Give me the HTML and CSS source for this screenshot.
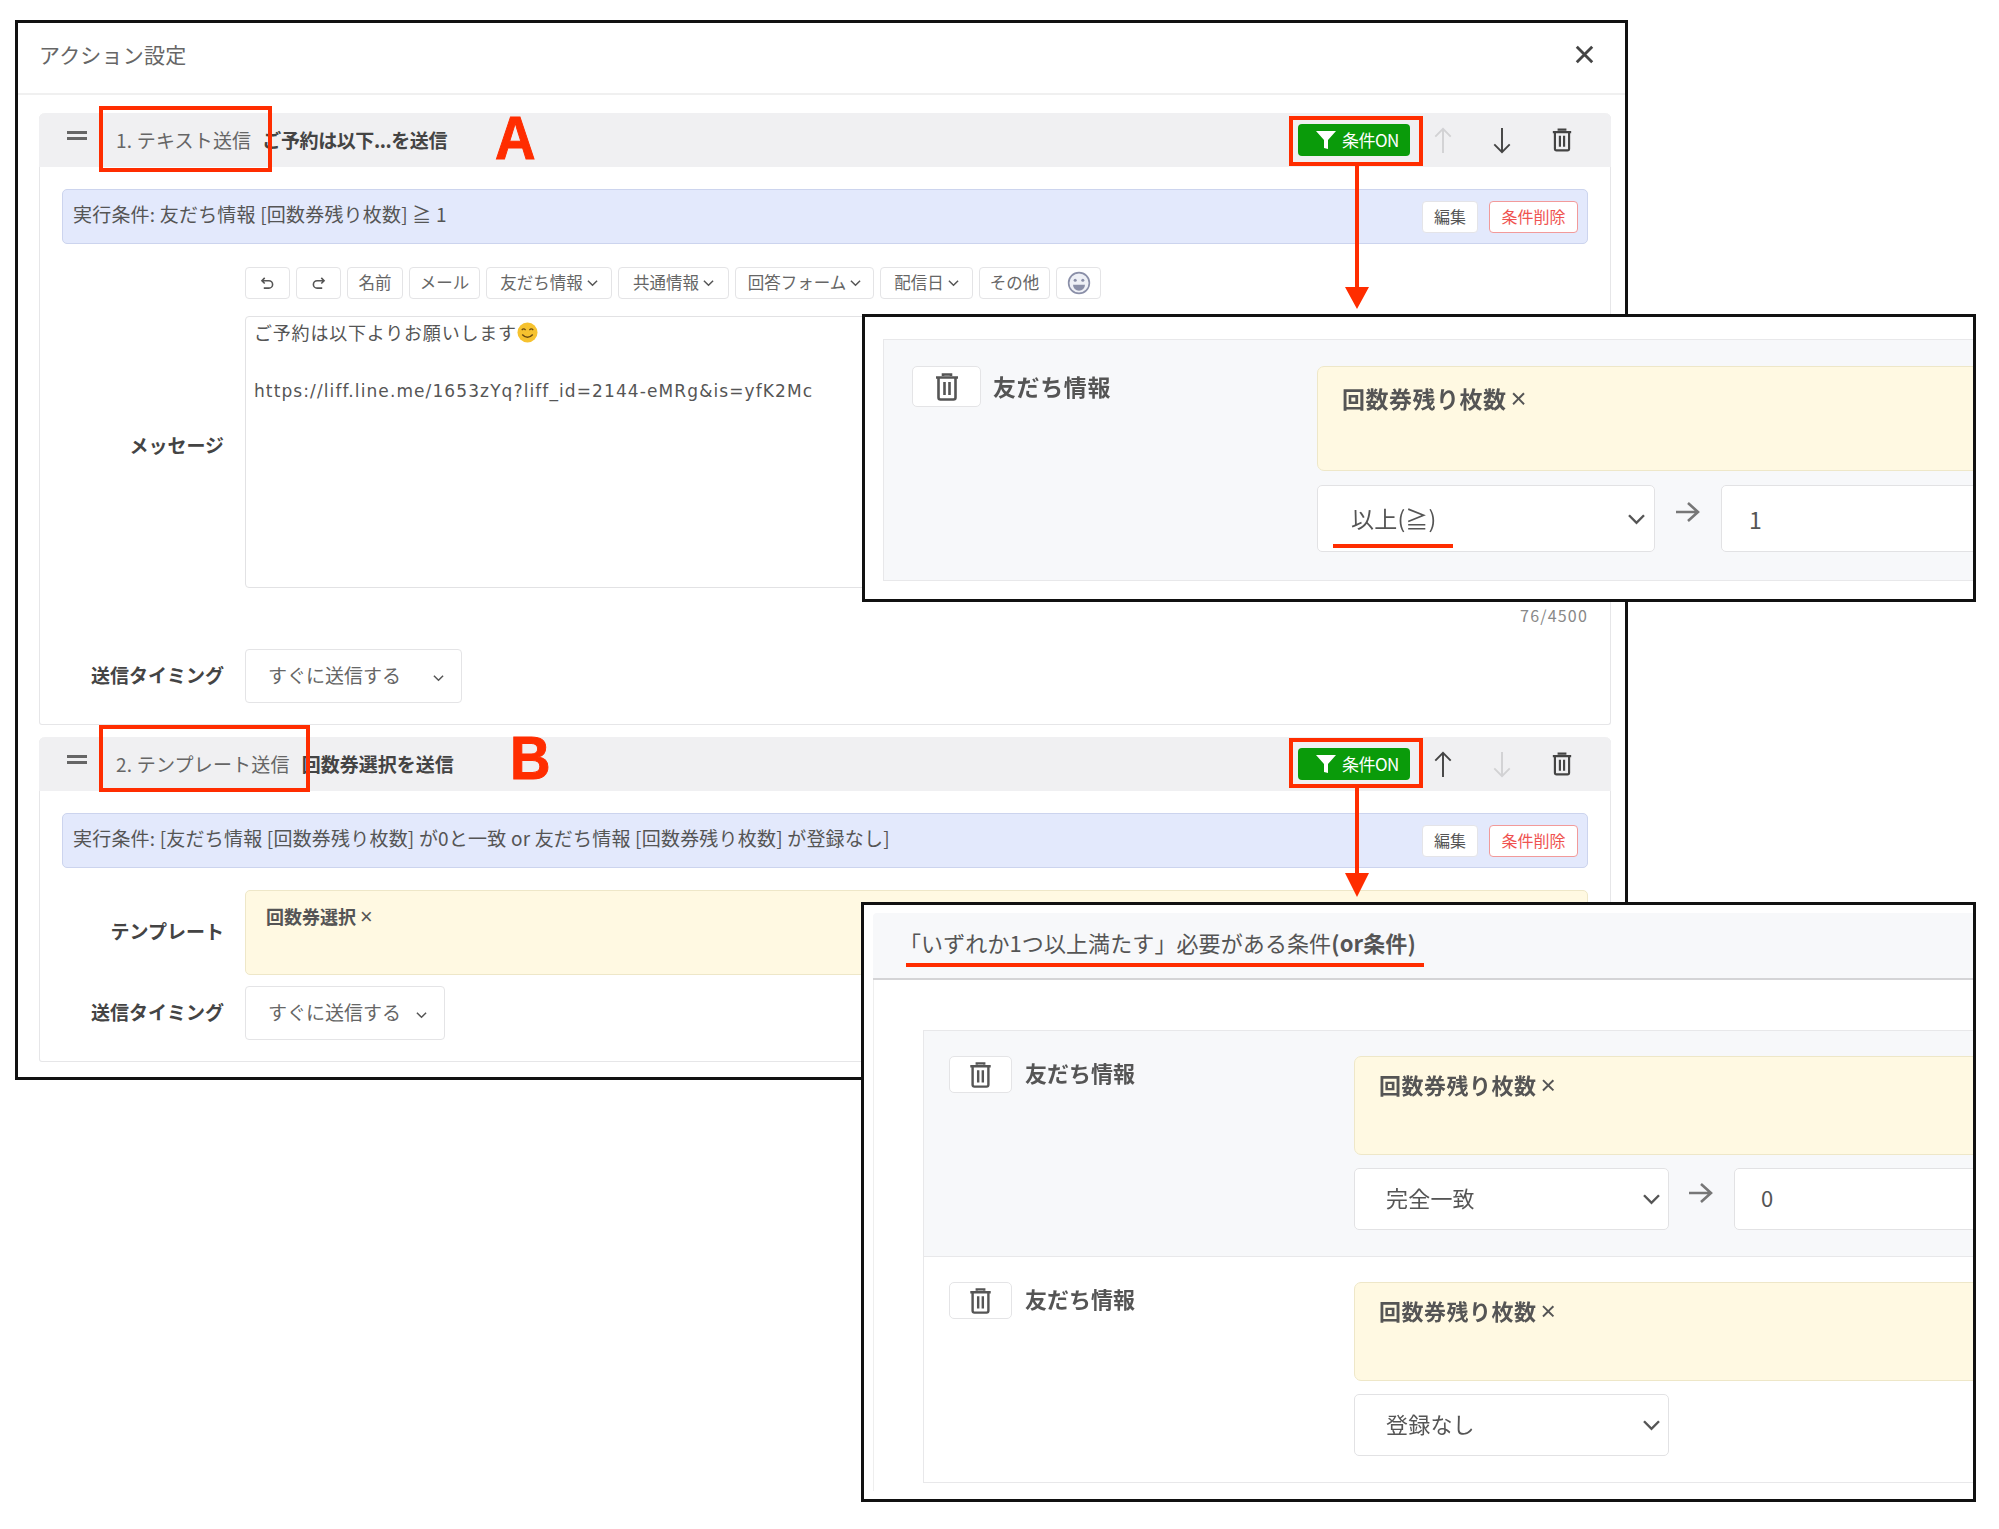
FILE: index.html
```html
<!DOCTYPE html>
<html lang="ja">
<head>
<meta charset="utf-8">
<title>アクション設定</title>
<link rel="stylesheet" href="styles.css">
</head>
<body>
<svg width="0" height="0" class="defs">
  <symbol id="trash" viewBox="0 0 24 28"><path d="M8 3V1.500h8V3M1 4.500h22M3.500 5v19.500a2 2 0 0 0 2 2h13a2 2 0 0 0 2-2V5M9.500 9v13M14.500 9v13" fill="none" stroke="currentColor" stroke-width="2.6"/></symbol>
  <symbol id="chev" viewBox="0 0 12 8"><path d="M1 1.500l5 5 5-5" fill="none" stroke="currentColor" stroke-width="1.6"/></symbol>
  <symbol id="funnel" viewBox="0 0 20 20"><path d="M0 1h20l-8 9v9l-4-1v-8z" fill="currentColor"/></symbol>
  <symbol id="up" viewBox="0 0 20 28"><path d="M10 27V2M2 10l8-8 8 8" fill="none" stroke="currentColor" stroke-width="2"/></symbol>
  <symbol id="right" viewBox="0 0 24 22"><path d="M0 11h22M12 2l10 9-10 9" fill="none" stroke="currentColor" stroke-width="2.6"/></symbol>
</svg>
<main class="canvas">
  <section class="dialog">
    <header class="dialog-head">
      <h1 class="dialog-title">アクション設定</h1>
      <svg class="close" viewBox="0 0 16 16"><path d="M1.500 1.500l13 13M14.500 1.500l-13 13" fill="none" stroke="currentColor" stroke-width="2.400"/></svg>
    </header>
    <div class="dialog-body">
      <article class="block block-one">
        <div class="block-head">
          <span class="drag"></span>
          <span class="block-name">1. テキスト送信</span>
          <b class="block-desc">ご予約は以下...を送信</b>
          <div class="tools">
            <span class="cond-on"><svg class="funnel"><use href="#funnel"/></svg><span class="cond-on-label">条件ON</span></span>
            <svg class="tool-icon faint"><use href="#up"/></svg>
            <svg class="tool-icon down"><use href="#up"/></svg>
            <svg class="tool-trash"><use href="#trash"/></svg>
          </div>
        </div>
        <div class="cond-bar">
          <span class="cond-text">実行条件: 友だち情報 [回数券残り枚数] ≧ 1</span>
          <div class="cond-actions"><span class="btn-edit">編集</span><span class="btn-del">条件削除</span></div>
        </div>
        <div class="form-row msg-row">
          <label class="form-label">メッセージ</label>
          <div class="form-field">
            <div class="toolbar">
              <span class="tb tb-icon"><svg class="hook" viewBox="0 0 16 14"><path d="M5 1L2 4l3 3M2 4h7.500a3.700 3.700 0 0 1 0 8H4" fill="none" stroke="currentColor" stroke-width="1.700"/></svg></span>
              <span class="tb tb-icon"><svg class="hook flip" viewBox="0 0 16 14"><path d="M5 1L2 4l3 3M2 4h7.500a3.700 3.700 0 0 1 0 8H4" fill="none" stroke="currentColor" stroke-width="1.700"/></svg></span>
              <span class="tb w-name">名前</span>
              <span class="tb w-mail">メール</span>
              <span class="tb w-friend">友だち情報<svg class="chev-s"><use href="#chev"/></svg></span>
              <span class="tb w-common">共通情報<svg class="chev-s"><use href="#chev"/></svg></span>
              <span class="tb w-form">回答フォーム<svg class="chev-s"><use href="#chev"/></svg></span>
              <span class="tb w-date">配信日<svg class="chev-s"><use href="#chev"/></svg></span>
              <span class="tb w-mail">その他</span>
              <span class="tb tb-icon"><svg class="smile" viewBox="0 0 22 22"><circle cx="11" cy="11" r="9.500" fill="#eef0f6" stroke="currentColor" stroke-width="1.500"/><circle cx="7.500" cy="8.500" r="1.400" fill="currentColor"/><circle cx="14.500" cy="8.500" r="1.400" fill="currentColor"/><path d="M5.500 12.500h11a5.500 5.500 0 0 1-11 0z" fill="currentColor"/></svg></span>
            </div>
            <div class="textarea">
              <p class="ta-line">ご予約は以下よりお願いします<svg class="emoji" viewBox="0 0 22 22"><circle cx="11" cy="11" r="10.500" fill="#f6c22f"/><path d="M5 8.500q2-2.500 4 0M13 8.500q2-2.500 4 0" fill="none" stroke="#6a4a10" stroke-width="1.400"/><path d="M5.500 13q5.500 6 11 0" fill="none" stroke="#6a4a10" stroke-width="1.500"/></svg></p>
              <p class="ta-line url">https://liff.line.me/1653zYq?liff_id=2144-eMRg&amp;is=yfK2Mc</p>
            </div>
            <div class="counter">76/4500</div>
          </div>
        </div>
        <div class="form-row timing-row">
          <label class="form-label">送信タイミング</label>
          <div class="select select-wide"><span>すぐに送信する</span><svg class="chev-s"><use href="#chev"/></svg></div>
        </div>
      </article>

      <article class="block block-two">
        <div class="block-head">
          <span class="drag"></span>
          <span class="block-name">2. テンプレート送信</span>
          <b class="block-desc">回数券選択を送信</b>
          <div class="tools">
            <span class="cond-on"><svg class="funnel"><use href="#funnel"/></svg><span class="cond-on-label">条件ON</span></span>
            <svg class="tool-icon"><use href="#up"/></svg>
            <svg class="tool-icon down faint"><use href="#up"/></svg>
            <svg class="tool-trash"><use href="#trash"/></svg>
          </div>
        </div>
        <div class="cond-bar">
          <span class="cond-text">実行条件: [友だち情報 [回数券残り枚数] が0と一致 or 友だち情報 [回数券残り枚数] が登録なし]</span>
          <div class="cond-actions"><span class="btn-edit">編集</span><span class="btn-del">条件削除</span></div>
        </div>
        <div class="form-row tpl-row">
          <label class="form-label">テンプレート</label>
          <div class="tpl-box"><b>回数券選択</b><span class="x">×</span></div>
        </div>
        <div class="form-row timing-row2">
          <label class="form-label">送信タイミング</label>
          <div class="select select-narrow"><span>すぐに送信する</span><svg class="chev-s"><use href="#chev"/></svg></div>
        </div>
      </article>
    </div>
  </section>

  <span class="mark mark-a"></span>
  <span class="mark mark-b"></span>
  <span class="mark mark-c"></span>
  <span class="mark mark-d"></span>
  <span class="letter letter-a">A</span>
  <span class="letter letter-b">B</span>
  <svg class="arrow arrow-a" viewBox="0 0 24 143"><path d="M10 0h4v121h10l-12 22L0 121h10z" fill="#ff2d00"/></svg>
  <svg class="arrow arrow-b" viewBox="0 0 24 109"><path d="M10 0h4v85h10l-12 24L0 85h10z" fill="#ff2d00"/></svg>

  <aside class="zoom zoom-a">
    <div class="cond-panel">
      <div class="cond-left">
        <span class="trash-btn"><svg><use href="#trash"/></svg></span>
        <b class="cond-label">友だち情報</b>
      </div>
      <div class="cond-right">
        <div class="yellow"><b>回数券残り枚数</b><span class="x">×</span></div>
        <div class="cmp-row">
          <div class="cmp-select"><span>以上(≧)</span><svg class="chev-l"><use href="#chev"/></svg></div>
          <svg class="cmp-arrow"><use href="#right"/></svg>
          <div class="cmp-input"><span>1</span></div>
        </div>
      </div>
    </div>
    <span class="underline"></span>
  </aside>

  <aside class="zoom zoom-b">
    <div class="or-head">「いずれか1つ以上満たす」必要がある条件<b>(or条件)</b><span class="underline"></span></div>
    <div class="or-body">
      <div class="cond-panel">
        <div class="cond-left">
          <span class="trash-btn"><svg><use href="#trash"/></svg></span>
          <b class="cond-label">友だち情報</b>
        </div>
        <div class="cond-right">
          <div class="yellow"><b>回数券残り枚数</b><span class="x">×</span></div>
          <div class="cmp-row">
            <div class="cmp-select"><span>完全一致</span><svg class="chev-l"><use href="#chev"/></svg></div>
            <svg class="cmp-arrow"><use href="#right"/></svg>
            <div class="cmp-input"><span>0</span></div>
          </div>
        </div>
      </div>
      <div class="cond-panel panel-white">
        <div class="cond-left">
          <span class="trash-btn"><svg><use href="#trash"/></svg></span>
          <b class="cond-label">友だち情報</b>
        </div>
        <div class="cond-right">
          <div class="yellow"><b>回数券残り枚数</b><span class="x">×</span></div>
          <div class="cmp-row">
            <div class="cmp-select"><span>登録なし</span><svg class="chev-l"><use href="#chev"/></svg></div>
          </div>
        </div>
      </div>
    </div>
  </aside>
</main>
</body>
</html>
```

FILE: styles.css
```css
* { box-sizing: border-box; }
html, body { margin: 0; padding: 0; background: #fff; }
body {
  font-family: "Noto Sans CJK JP", "Noto Sans", sans-serif;
  color: #555;
  font-size: 19px;
  letter-spacing: .2px;
  overflow: hidden;
}
.defs { position: absolute; }
p, h1 { margin: 0; }
.canvas { position: relative; width: 1999px; height: 1529px; padding: 20px 0 0 15px; filter: blur(.35px); }

/* dialog */
.dialog { width: 1613px; height: 1060px; border: 3px solid #111; background: #fff; }
.dialog-head { height: 72px; display: flex; align-items: center; justify-content: space-between; padding: 0 31px 7px 21px; border-bottom: 2px solid #f0f0f0; }
.dialog-title { font-size: 21px; font-weight: 400; color: #666; padding-bottom: 2px; }
.close { width: 19px; height: 19px; color: #444; }
.dialog-body { padding: 18px 14px 0 21px; }

/* blocks */
.block { border: 1px solid #e6e6e8; border-top: 0; border-radius: 6px 6px 3px 3px; }
.block-one { height: 612px; margin-bottom: 12px; }
.block-two { height: 325px; }
.block-head { height: 54px; background: #f0f0f2; border-radius: 6px 6px 0 0; display: flex; align-items: center; padding-left: 28px; margin: 0 -1px; }
.drag { width: 20px; height: 9px; border-top: 3px solid #666; border-bottom: 3px solid #666; margin-top: -10px; margin-right: 29px; }
.block-name { color: #666; padding-bottom: 2px; }
.block-one .block-desc { margin-left: 11px; letter-spacing: -.4px; }
.block-two .block-desc { margin-left: 12px; }
.block-desc { color: #444; font-weight: 700; letter-spacing: 0; padding-bottom: 2px; }
.tools { margin-left: auto; display: flex; align-items: center; padding-right: 39px; color: #444; }
.cond-on { width: 112px; height: 32px; background: #0a9b0a; color: #fff; border-radius: 4px; display: flex; align-items: center; padding-left: 18px; font-size: 17px; letter-spacing: -.5px; }
.cond-on-label { padding-bottom: 2px; }
.funnel { width: 20px; height: 20px; margin-right: 6px; }
.tool-icon { width: 20px; height: 27px; margin-left: 23px; color: #444; }
.tool-icon.down { transform: rotate(180deg); margin-left: 39px; }
.tool-icon.faint { color: #d2d2d4; }
.tool-trash { width: 20px; height: 24px; margin-left: 40px; color: #444; }

.cond-bar { margin: 22px 22px 0; height: 55px; background: #e3e9fc; border: 1px solid #ccd4ee; border-radius: 5px; display: flex; align-items: center; justify-content: space-between; padding: 0 9px 0 10px; color: #555; }
.cond-text { margin-bottom: 6px; }
.cond-actions { display: flex; gap: 11px; }
.btn-edit, .btn-del { height: 32px; border-radius: 4px; background: #fff; font-size: 16px; letter-spacing: 0; display: flex; align-items: center; justify-content: center; padding-bottom: 2px; }
.btn-edit { width: 56px; border: 1px solid #e4e4e8; color: #555; }
.btn-del { width: 89px; border: 1px solid #f29a9a; color: #ef5350; }

/* form */
.form-row { display: grid; grid-template-columns: 184px 1fr; column-gap: 21px; padding-right: 22px; }
.form-label { text-align: right; font-weight: 700; color: #444; align-self: center; padding-bottom: 4px; letter-spacing: 0; }
.msg-row { margin-top: 23px; }
.toolbar { display: flex; gap: 6px; margin-bottom: 17px; }
.tb { height: 32px; border: 1px solid #e4e4e6; border-radius: 4px; font-size: 16.500px; letter-spacing: 0; display: flex; align-items: center; justify-content: center; gap: 4px; color: #666; background: #fff; padding-bottom: 3px; }
.tb-icon { width: 45px; padding: 0; }
.w-name { width: 56px; }
.w-mail { width: 71px; }
.w-friend { width: 126px; }
.w-common { width: 111px; }
.w-form { width: 139px; }
.w-date { width: 93px; }
.hook { width: 15px; height: 13px; color: #555; }
.hook.flip { transform: scaleX(-1); }
.smile { width: 24px; height: 24px; color: #8a8fa8; }
.chev-s { width: 11px; height: 8px; color: #555; margin-top: 3px; }
.textarea { height: 272px; border: 1px solid #e2e2e4; border-radius: 4px; padding: 2px 8px; font-size: 18px; letter-spacing: .8px; color: #555; line-height: 27px; }
.ta-line { display: flex; align-items: center; }
.url { margin-top: 32px; font-family: "DejaVu Sans", sans-serif; font-size: 17px; letter-spacing: 1.100px; }
.emoji { width: 21px; height: 21px; }
.counter { text-align: right; font-size: 16px; color: #888; margin-top: 16px; line-height: 22px; letter-spacing: 1.200px; }
.timing-row { margin-top: 23px; }
.tpl-row { margin-top: 22px; }
.timing-row2 { margin-top: 11px; }
.select { height: 54px; border: 1px solid #e4e4e6; border-radius: 4px; display: flex; align-items: center; justify-content: space-between; padding: 0 17px 0 22px; color: #666; letter-spacing: 0; }
.select span { padding-bottom: 4px; }
.select-wide { width: 217px; }
.select-narrow { width: 200px; }
.tpl-box { height: 85px; background: #fff9e2; border: 1px solid #eee7c8; border-radius: 5px; padding: 12px 20px; font-size: 18px; line-height: 26px; }
.tpl-box b { color: #555; letter-spacing: 0; }
.x { font-family: "Liberation Sans", sans-serif; font-size: 1.200em; margin-left: 4px; }

/* annotations */
.mark { position: absolute; border: 4px solid #ff2d00; }
.mark-a { left: 99px; top: 106px; width: 173px; height: 66px; }
.mark-b { left: 99px; top: 725px; width: 211px; height: 67px; }
.mark-c { left: 1289px; top: 116px; width: 134px; height: 50px; }
.mark-d { left: 1289px; top: 738px; width: 134px; height: 50px; }
.letter { position: absolute; font-family: "Liberation Sans", sans-serif; font-weight: 700; color: #ff2d00; font-size: 61px; line-height: 1; -webkit-text-stroke: 1px #ff2d00; letter-spacing: 0; transform: scaleX(.92); transform-origin: left; }
.letter-a { left: 495px; top: 108px; }
.letter-b { left: 510px; top: 728px; }
.arrow { position: absolute; width: 24px; }
.arrow-a { left: 1345px; top: 166px; height: 143px; }
.arrow-b { left: 1345px; top: 788px; height: 109px; }

/* zoom callouts */
.zoom { position: absolute; border: 3px solid #111; background: #fff; overflow: hidden; }
.zoom-a { left: 862px; top: 314px; width: 1114px; height: 288px; padding: 22px 0 0 18px; }
.zoom-b { left: 861px; top: 902px; width: 1115px; height: 600px; padding: 8px 0 0 9px; }
.cond-panel { display: flex; background: #f7f8fa; border: 1px solid #e8e8ea; border-right: 0; }
.panel-white { background: #fff; border-top: 0; }
.cond-left { display: flex; align-items: flex-start; flex: none; }
.cond-right { flex: 1; min-width: 0; }
.trash-btn { display: flex; align-items: center; justify-content: center; background: #fff; border: 1px solid #e4e4e6; border-radius: 5px; color: #555; }
.cond-label { color: #555; letter-spacing: 0; }
.yellow { background: #fff9e2; border: 1px solid #eee7c8; border-radius: 7px; color: #555; }
.yellow b { letter-spacing: .5px; }
.cmp-row { display: flex; align-items: flex-start; }
.cmp-select, .cmp-input { flex: none; background: #fff; border: 1px solid #e2e2e4; border-radius: 5px; display: flex; align-items: center; color: #555; }
.cmp-select { justify-content: space-between; }
.cmp-select span { padding-bottom: 2px; }
.chev-l { width: 19px; height: 12px; color: #555; }
.cmp-arrow { flex: none; color: #777; width: 24px; height: 22px; }
.underline { position: absolute; background: #ff2d00; height: 4px; }

.zoom-a .cond-panel { height: 242px; width: 1200px; padding: 26px 0 0 28px; font-size: 23px; }
.zoom-a .cond-left { width: 405px; gap: 12px; }
.zoom-a .trash-btn { width: 69px; height: 41px; }
.zoom-a .trash-btn svg { width: 24px; height: 28px; }
.zoom-a .cond-label { line-height: 40px; letter-spacing: .6px; }
.zoom-a .yellow { height: 105px; padding: 13px 24px; line-height: 37px; }
.zoom-a .cmp-row { margin-top: 14px; }
.zoom-a .cmp-select { width: 338px; height: 67px; padding: 0 8px 0 33px; }
.zoom-a .cmp-arrow { margin: 16px 21px 0; }
.zoom-a .cmp-input { width: 400px; height: 67px; padding-left: 27px; }
.zoom-a .underline { left: 468px; top: 227px; width: 120px; }

.or-head { position: relative; height: 67px; background: #f7f8fa; border-bottom: 2px solid #d4d4d6; padding: 9px 0 0 26px; font-size: 22px; line-height: 40px; letter-spacing: .1px; color: #555; border-radius: 4px 0 0 0; }
.or-head .underline { left: 33px; top: 50px; width: 518px; }
.or-body { border-left: 1px solid #eee; padding: 50px 0 0 49px; height: 511px; }
.zoom-b .cond-panel { width: 1200px; padding: 25px 0 0 25px; font-size: 22px; }
.zoom-b .cond-panel:first-child { height: 227px; }
.zoom-b .panel-white { height: 226px; }
.zoom-b .cond-left { width: 405px; gap: 13px; }
.zoom-b .trash-btn { width: 63px; height: 37px; }
.zoom-b .trash-btn svg { width: 23px; height: 26px; }
.zoom-b .cond-label { line-height: 32px; }
.zoom-b .yellow { height: 99px; padding: 9px 24px; line-height: 36px; }
.zoom-b .cmp-row { margin-top: 13px; }
.zoom-b .cmp-select { width: 315px; height: 62px; padding: 0 7px 0 31px; }
.zoom-b .cmp-select span, .zoom-b .cmp-input span { padding-bottom: 5px; }
.zoom-b .cmp-arrow { margin: 14px 21px 0 20px; }
.zoom-b .cmp-input { width: 400px; height: 62px; padding-left: 26px; }
```
